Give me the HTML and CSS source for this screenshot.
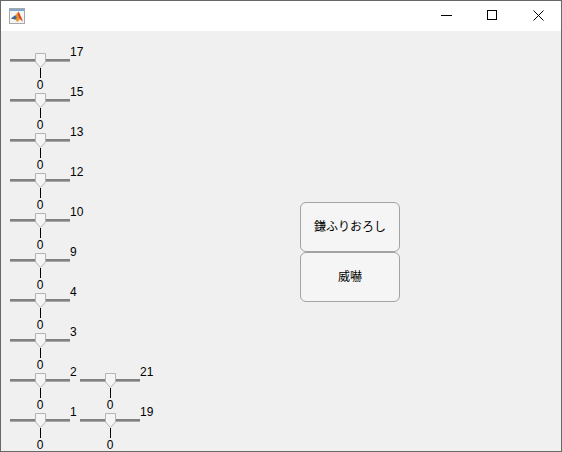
FILE: index.html
```html
<!DOCTYPE html>
<html lang="ja">
<head>
  <meta charset="UTF-8">
  <meta name="viewport" content="width=device-width, initial-scale=1.0">
  <title>Figure</title>
  <link rel="stylesheet" href="styles.css">
</head>
<body>

<div class="window">
  <div class="titlebar">
    <svg class="app-icon" width="16" height="16" viewBox="0 0 16 16">
      <rect x="0.5" y="0.5" width="15" height="15" fill="#f4f4f4" stroke="#a8a8a8"/>
      <rect x="1" y="1" width="14" height="2" fill="#7fa6cf"/>
      <path d="M2 10.5 L6 7.5 L9.5 3.5 L14 13.5 L11 11 L8.5 14 L6 11.5 Z" fill="#eb9330"/>
      <path d="M2 10.5 L6 7.5 L8 9.5 L6 11.5 Z" fill="#3268a8"/>
      <path d="M9.5 3.5 L14 13.5 L11 11 L9 7 Z" fill="#d4431c"/>
    </svg>
    <div class="caption-buttons">
      <svg width="12" height="12" viewBox="0 0 12 12"><path d="M0 5.5 H11" stroke="#000"/></svg>
      <svg width="12" height="12" viewBox="0 0 12 12"><rect x="0.5" y="0.5" width="9" height="9" fill="none" stroke="#000"/></svg>
      <svg width="12" height="12" viewBox="0 0 12 12"><path d="M0.5 0.5 L10.5 10.5 M10.5 0.5 L0.5 10.5" stroke="#000" fill="none"/></svg>
    </div>
  </div>

  <div class="content">
    <div class="sliders">
      <div class="slider-row">
        <div class="slider"><div class="control"><div class="track"><svg class="thumb" width="11" height="15" viewBox="0 0 11 15"><path d="M0.5 0.5 H10.5 V9 L5.5 14.5 L0.5 9 Z"/></svg></div><div class="tick"></div><div class="value">0</div></div><div class="max-label">17</div></div>
      </div>
      <div class="slider-row">
        <div class="slider"><div class="control"><div class="track"><svg class="thumb" width="11" height="15" viewBox="0 0 11 15"><path d="M0.5 0.5 H10.5 V9 L5.5 14.5 L0.5 9 Z"/></svg></div><div class="tick"></div><div class="value">0</div></div><div class="max-label">15</div></div>
      </div>
      <div class="slider-row">
        <div class="slider"><div class="control"><div class="track"><svg class="thumb" width="11" height="15" viewBox="0 0 11 15"><path d="M0.5 0.5 H10.5 V9 L5.5 14.5 L0.5 9 Z"/></svg></div><div class="tick"></div><div class="value">0</div></div><div class="max-label">13</div></div>
      </div>
      <div class="slider-row">
        <div class="slider"><div class="control"><div class="track"><svg class="thumb" width="11" height="15" viewBox="0 0 11 15"><path d="M0.5 0.5 H10.5 V9 L5.5 14.5 L0.5 9 Z"/></svg></div><div class="tick"></div><div class="value">0</div></div><div class="max-label">12</div></div>
      </div>
      <div class="slider-row">
        <div class="slider"><div class="control"><div class="track"><svg class="thumb" width="11" height="15" viewBox="0 0 11 15"><path d="M0.5 0.5 H10.5 V9 L5.5 14.5 L0.5 9 Z"/></svg></div><div class="tick"></div><div class="value">0</div></div><div class="max-label">10</div></div>
      </div>
      <div class="slider-row">
        <div class="slider"><div class="control"><div class="track"><svg class="thumb" width="11" height="15" viewBox="0 0 11 15"><path d="M0.5 0.5 H10.5 V9 L5.5 14.5 L0.5 9 Z"/></svg></div><div class="tick"></div><div class="value">0</div></div><div class="max-label">9</div></div>
      </div>
      <div class="slider-row">
        <div class="slider"><div class="control"><div class="track"><svg class="thumb" width="11" height="15" viewBox="0 0 11 15"><path d="M0.5 0.5 H10.5 V9 L5.5 14.5 L0.5 9 Z"/></svg></div><div class="tick"></div><div class="value">0</div></div><div class="max-label">4</div></div>
      </div>
      <div class="slider-row">
        <div class="slider"><div class="control"><div class="track"><svg class="thumb" width="11" height="15" viewBox="0 0 11 15"><path d="M0.5 0.5 H10.5 V9 L5.5 14.5 L0.5 9 Z"/></svg></div><div class="tick"></div><div class="value">0</div></div><div class="max-label">3</div></div>
      </div>
      <div class="slider-row">
        <div class="slider"><div class="control"><div class="track"><svg class="thumb" width="11" height="15" viewBox="0 0 11 15"><path d="M0.5 0.5 H10.5 V9 L5.5 14.5 L0.5 9 Z"/></svg></div><div class="tick"></div><div class="value">0</div></div><div class="max-label">2</div></div>
        <div class="slider"><div class="control"><div class="track"><svg class="thumb" width="11" height="15" viewBox="0 0 11 15"><path d="M0.5 0.5 H10.5 V9 L5.5 14.5 L0.5 9 Z"/></svg></div><div class="tick"></div><div class="value">0</div></div><div class="max-label">21</div></div>
      </div>
      <div class="slider-row">
        <div class="slider"><div class="control"><div class="track"><svg class="thumb" width="11" height="15" viewBox="0 0 11 15"><path d="M0.5 0.5 H10.5 V9 L5.5 14.5 L0.5 9 Z"/></svg></div><div class="tick"></div><div class="value">0</div></div><div class="max-label">1</div></div>
        <div class="slider"><div class="control"><div class="track"><svg class="thumb" width="11" height="15" viewBox="0 0 11 15"><path d="M0.5 0.5 H10.5 V9 L5.5 14.5 L0.5 9 Z"/></svg></div><div class="tick"></div><div class="value">0</div></div><div class="max-label">19</div></div>
      </div>
    </div>

    <div class="actions">
      <button class="action">鎌ふりおろし</button>
      <button class="action">威嚇</button>
    </div>
  </div>
</div>

</body>
</html>
```

FILE: styles.css
```css
* {
  box-sizing: border-box;
}
html, body {
  margin: 0;
  height: 100%;
}
body {
  font-family: "Liberation Sans", "Noto Sans CJK JP", sans-serif;
  font-size: 12px;
  color: #000;
}
.window {
  width: 562px;
  height: 452px;
  border: 1px solid #686868;
  background: #f0f0f0;
  overflow: hidden;
  display: flex;
  flex-direction: column;
}
.titlebar {
  height: 30px;
  flex: none;
  background: #fff;
  display: flex;
  align-items: center;
  justify-content: space-between;
  padding: 0 16px 0 8px;
}
.app-icon {
  display: block;
}
.caption-buttons {
  display: flex;
  gap: 34px;
}
.caption-buttons svg {
  display: block;
}
.content {
  flex: 1;
  min-height: 0;
  display: flex;
}
.sliders {
  width: 299px;
  flex: none;
  padding: 14px 0 0 9px;
}
.slider-row {
  display: flex;
  height: 40px;
}
.slider {
  display: flex;
  width: 70px;
}
.control {
  width: 60px;
  height: 47px;
  flex: none;
  display: flex;
  flex-direction: column;
  align-items: center;
}
.track {
  position: relative;
  flex: none;
  width: 60px;
  height: 3px;
  margin-top: 14px;
  background: linear-gradient(#808080 0 2px, #a8a8a8 2px);
}
.thumb {
  position: absolute;
  left: 25px;
  top: -6px;
}
.thumb path {
  fill: #f5f5f5;
  stroke: #b4b4b4;
}
.tick {
  flex: none;
  width: 1px;
  height: 10px;
  margin-top: 6px;
  background: #000;
}
.value {
  flex: none;
  line-height: 14px;
  height: 14px;
}
.max-label {
  line-height: 14px;
}
.actions {
  width: 100px;
  flex: none;
  display: flex;
  flex-direction: column;
  justify-content: center;
  padding-top: 22px;
}
.action {
  width: 100px;
  height: 50px;
  flex: none;
  padding: 0 0 3px;
  border: 1px solid #a3a3a3;
  border-radius: 6px;
  background: #f5f5f5;
  font: inherit;
  color: #000;
}
```
